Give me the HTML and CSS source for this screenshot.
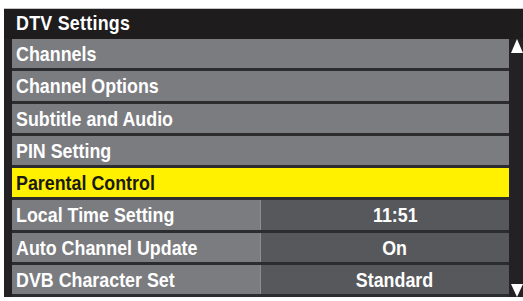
FILE: index.html
```html
<!DOCTYPE html>
<html>
<head>
<meta charset="utf-8">
<link rel="stylesheet" href="styles.css">
</head>
<body>
<div class="panel">
  <div class="header"><span class="txt">DTV Settings</span></div>
  <div class="body">
    <div class="list">
      <div class="row"><span class="label"><span class="txt">Channels</span></span></div>
      <div class="row"><span class="label"><span class="txt">Channel Options</span></span></div>
      <div class="row"><span class="label"><span class="txt">Subtitle and Audio</span></span></div>
      <div class="row"><span class="label"><span class="txt">PIN Setting</span></span></div>
      <div class="row selected"><span class="label"><span class="txt">Parental Control</span></span></div>
      <div class="row split"><span class="label"><span class="txt">Local Time Setting</span></span><span class="value"><span class="txt">11:51</span></span></div>
      <div class="row split"><span class="label"><span class="txt">Auto Channel Update</span></span><span class="value"><span class="txt">On</span></span></div>
      <div class="row split"><span class="label"><span class="txt">DVB Character Set</span></span><span class="value"><span class="txt">Standard</span></span></div>
    </div>
    <div class="scroll">
      <svg class="arrow" width="12" height="14" viewBox="0 0 12 14"><polygon points="6,0 12,14 0,14" fill="#fff"/></svg>
      <svg class="arrow" width="12" height="13" viewBox="0 0 12 13"><polygon points="0,0 12,0 6,13" fill="#fff"/></svg>
    </div>
  </div>
</div>
</body>
</html>
```
FILE: styles.css
```css
html, body {
  margin: 0;
  padding: 0;
  background: #ffffff;
}
body {
  padding-top: 8px;
  font-family: "Liberation Sans", Arial, sans-serif;
  font-weight: bold;
  color: #ffffff;
}
.txt {
  display: inline-block;
  transform: scaleX(0.85);
  transform-origin: left center;
  white-space: nowrap;
}
.panel {
  margin-left: 4px;
  width: 519px;
  height: 289px;
  background: #232124;
  border-top: 1px solid #c4c4c4;
  box-sizing: border-box;
  display: flex;
  flex-direction: column;
}
.header {
  height: 31px;
  padding-left: 12px;
  font-size: 21px;
  line-height: 28px;
  background: #1e1c1d;
  letter-spacing: 0.3px;
}
.body {
  display: flex;
  padding-left: 8px;
}
.list {
  width: 497px;
  display: flex;
  flex-direction: column;
  gap: 3px;
  background: #2c2c2f;
}
.row {
  height: 29.25px;
  display: flex;
  background: #7b7c80;
  font-size: 21px;
  line-height: 29px;
}
.row .label {
  padding-left: 4px;
  flex: 0 0 244px;
  overflow: hidden;
}
.row.selected {
  background: #fff100;
  color: #1a1a12;
}
.row.split .label {
  border-right: 1px solid #8d8e91;
}
.row.split .value {
  flex: 1;
  background: #56585b;
  text-align: center;
  padding-left: 20px;
  box-sizing: border-box;
}
.row.split .value .txt {
  transform-origin: center center;
}
.scroll {
  flex: 1;
  display: flex;
  flex-direction: column;
  justify-content: space-between;
  align-items: flex-end;
  height: 258px;
}
.arrow {
  display: block;
}
```
